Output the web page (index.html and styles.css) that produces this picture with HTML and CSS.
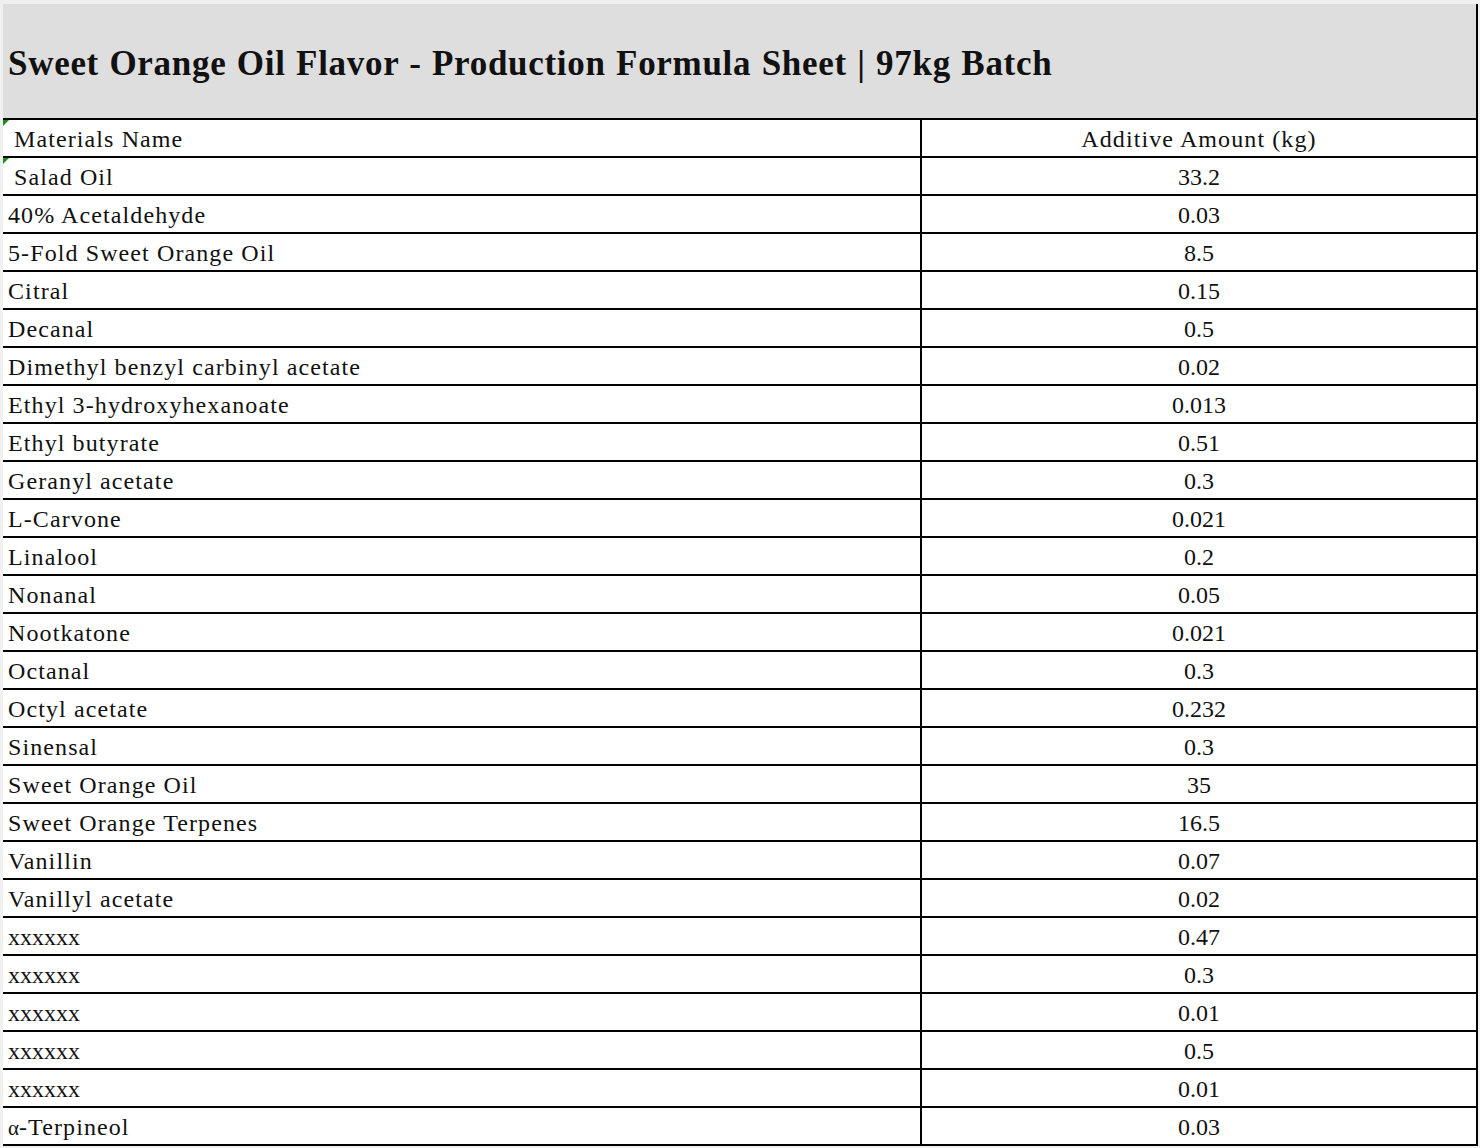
FILE: index.html
```html
<!DOCTYPE html>
<html>
<head>
<meta charset="utf-8">
<title>Sweet Orange Oil Flavor - Production Formula Sheet</title>
<link rel="stylesheet" href="styles.css">
</head>
<body>
<div class="sheet">
  <div class="title-row"><h1 class="title">Sweet Orange Oil Flavor - Production Formula Sheet | 97kg Batch</h1></div>
  <div class="row head">
    <div class="name flagged indent">Materials Name</div>
    <div class="amt label">Additive Amount (kg)</div>
  </div>
  <div class="row"><div class="name flagged indent">Salad Oil</div><div class="amt">33.2</div></div>
  <div class="row"><div class="name">40% Acetaldehyde</div><div class="amt">0.03</div></div>
  <div class="row"><div class="name">5-Fold Sweet Orange Oil</div><div class="amt">8.5</div></div>
  <div class="row"><div class="name">Citral</div><div class="amt">0.15</div></div>
  <div class="row"><div class="name">Decanal</div><div class="amt">0.5</div></div>
  <div class="row"><div class="name">Dimethyl benzyl carbinyl acetate</div><div class="amt">0.02</div></div>
  <div class="row"><div class="name">Ethyl 3-hydroxyhexanoate</div><div class="amt">0.013</div></div>
  <div class="row"><div class="name">Ethyl butyrate</div><div class="amt">0.51</div></div>
  <div class="row"><div class="name">Geranyl acetate</div><div class="amt">0.3</div></div>
  <div class="row"><div class="name">L-Carvone</div><div class="amt">0.021</div></div>
  <div class="row"><div class="name">Linalool</div><div class="amt">0.2</div></div>
  <div class="row"><div class="name">Nonanal</div><div class="amt">0.05</div></div>
  <div class="row"><div class="name">Nootkatone</div><div class="amt">0.021</div></div>
  <div class="row"><div class="name">Octanal</div><div class="amt">0.3</div></div>
  <div class="row"><div class="name">Octyl acetate</div><div class="amt">0.232</div></div>
  <div class="row"><div class="name">Sinensal</div><div class="amt">0.3</div></div>
  <div class="row"><div class="name">Sweet Orange Oil</div><div class="amt">35</div></div>
  <div class="row"><div class="name">Sweet Orange Terpenes</div><div class="amt">16.5</div></div>
  <div class="row"><div class="name">Vanillin</div><div class="amt">0.07</div></div>
  <div class="row"><div class="name">Vanillyl acetate</div><div class="amt">0.02</div></div>
  <div class="row"><div class="name plain">xxxxxx</div><div class="amt">0.47</div></div>
  <div class="row"><div class="name plain">xxxxxx</div><div class="amt">0.3</div></div>
  <div class="row"><div class="name plain">xxxxxx</div><div class="amt">0.01</div></div>
  <div class="row"><div class="name plain">xxxxxx</div><div class="amt">0.5</div></div>
  <div class="row"><div class="name plain">xxxxxx</div><div class="amt">0.01</div></div>
  <div class="row last"><div class="name"><span class="greek">α</span>-Terpineol</div><div class="amt">0.03</div></div>
</div>
</body>
</html>
```
FILE: styles.css
```css
html, body {
  margin: 0;
  padding: 0;
}
body {
  background: #f0f0f0;
  width: 1480px;
  height: 1148px;
  overflow: hidden;
}
.sheet {
  margin: 4px 0 0 3px;
  width: 1473px;
  border-right: 2px solid #000;
  background: #fff;
  font-family: "Liberation Serif", "Times New Roman", serif;
  color: #111;
}
.title-row {
  height: 114px;
  background: #dedede;
  display: flex;
  align-items: center;
}
.title {
  margin: 0;
  padding: 0 0 0 5px;
  font-size: 35px;
  font-weight: bold;
  letter-spacing: 0.7px;
  word-spacing: 1px;
  line-height: 1;
  position: relative;
  top: 2px;
}
.row {
  display: flex;
  height: 36px;
  border-top: 2px solid #000;
}
.row.last {
  border-bottom: 2px solid #000;
}
.name, .amt {
  display: flex;
  align-items: flex-end;
  padding-bottom: 5px;
  box-sizing: border-box;
  font-size: 24px;
  line-height: 1;
}
.name {
  width: 917px;
  padding-left: 5px;
  letter-spacing: 1.1px;
  position: relative;
}
.name.indent {
  padding-left: 11px;
}
.name.plain {
  letter-spacing: 0;
  font-size: 24px;
}
.greek {
  font-size: 21px;
  letter-spacing: 0;
}
.amt {
  flex: 1;
  justify-content: center;
  border-left: 2px solid #000;
  letter-spacing: 0;
}
.amt.label {
  letter-spacing: 1.1px;
}
.flagged::before {
  content: "";
  position: absolute;
  left: 0;
  top: 0;
  width: 0;
  height: 0;
  border-top: 6px solid #1b8f1b;
  border-right: 6px solid transparent;
}
```
